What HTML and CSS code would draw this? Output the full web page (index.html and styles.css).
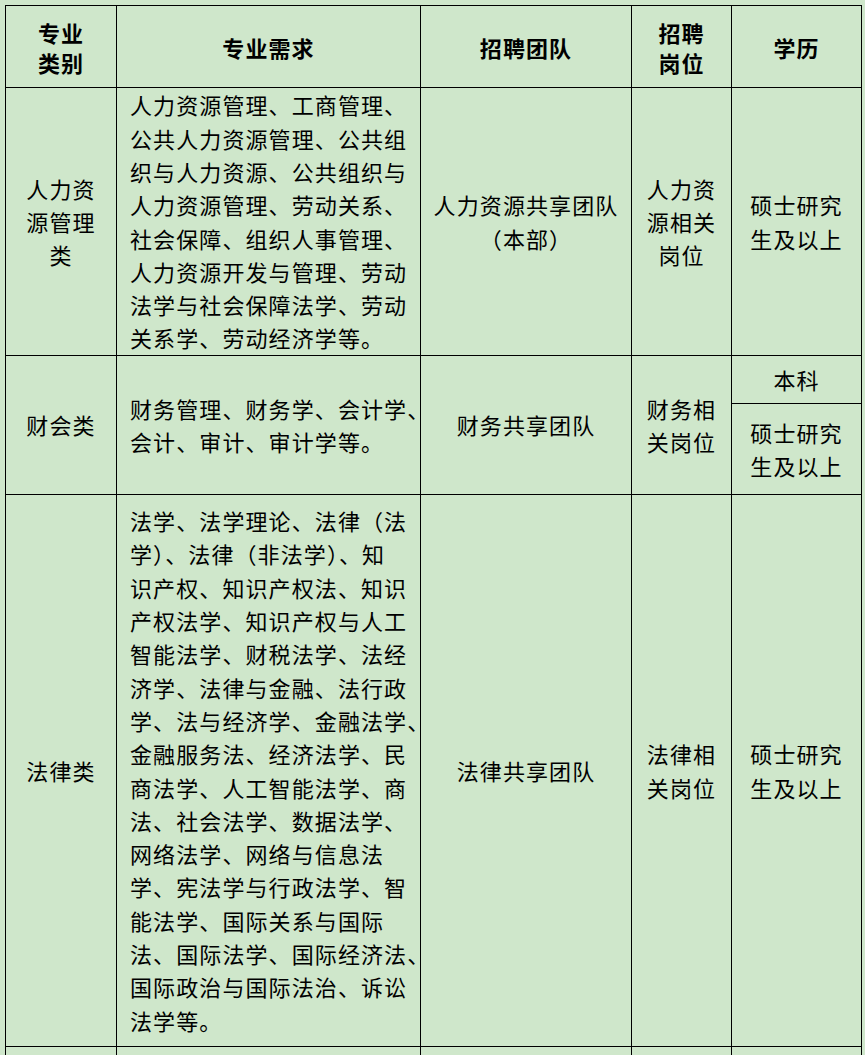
FILE: index.html
```html
<!DOCTYPE html>
<html lang="zh-CN">
<head>
<meta charset="utf-8">
<link rel="stylesheet" href="styles.css">
</head>
<body>
<table class="grid">
  <colgroup>
    <col class="c1"><col class="c2"><col class="c3"><col class="c4"><col class="c5">
  </colgroup>
  <tr class="head">
    <th>专业<br>类别</th>
    <th>专业需求</th>
    <th>招聘团队</th>
    <th>招聘<br>岗位</th>
    <th>学历</th>
  </tr>
  <tr class="r1">
    <td>人力资<br>源管理<br>类</td>
    <td class="req">人力资源管理、工商管理<span class="tail">、</span><br>公共人力资源管理、公共组<br>织与人力资源、公共组织与<br>人力资源管理、劳动关系<span class="tail">、</span><br>社会保障、组织人事管理<span class="tail">、</span><br>人力资源开发与管理、劳动<br>法学与社会保障法学、劳动<br>关系学、劳动经济学等。</td>
    <td>人力资源共享团队<br>（本部）</td>
    <td>人力资<br>源相关<br>岗位</td>
    <td>硕士研究<br>生及以上</td>
  </tr>
  <tr class="r2a">
    <td rowspan="2">财会类</td>
    <td rowspan="2" class="req">财务管理、财务学、会计学<span class="tail">、</span><br>会计、审计、审计学等。</td>
    <td rowspan="2">财务共享团队</td>
    <td rowspan="2">财务相<br>关岗位</td>
    <td>本科</td>
  </tr>
  <tr class="r2b">
    <td>硕士研究<br>生及以上</td>
  </tr>
  <tr class="r3">
    <td>法律类</td>
    <td class="req">法学、法学理论、法律（法<br>学）、法律（非法学）、知<br>识产权、知识产权法、知识<br>产权法学、知识产权与人工<br>智能法学、财税法学、法经<br>济学、法律与金融、法行政<br>学、法与经济学、金融法学<span class="tail">、</span><br>金融服务法、经济法学、民<br>商法学、人工智能法学、商<br>法、社会法学、数据法学<span class="tail">、</span><br>网络法学、网络与信息法<br>学、宪法学与行政法学、智<br>能法学、国际关系与国际<br>法、国际法学、国际经济法<span class="tail">、</span><br>国际政治与国际法治、诉讼<br>法学等。</td>
    <td>法律共享团队</td>
    <td>法律相<br>关岗位</td>
    <td>硕士研究<br>生及以上</td>
  </tr>
  <tr class="r4">
    <td></td><td></td><td></td><td></td><td></td>
  </tr>
</table>
</body>
</html>
```
FILE: styles.css
```css
html, body {
  margin: 0;
  padding: 0;
  background: #cfe7cb;
  overflow: hidden;
}
body {
  padding: 5px 0 0 5px;
  font-family: "Noto Sans CJK SC", sans-serif;
  color: #000;
}
.grid {
  border-collapse: collapse;
  table-layout: fixed;
  width: 856px;
  font-size: 22px;
  letter-spacing: 1.1px;
}
.c1 { width: 111px; }
.c2 { width: 304px; }
.c3 { width: 211px; }
.c4 { width: 100px; }
.c5 { width: 130px; }
.grid th, .grid td {
  border: 1.5px solid #000;
  padding: 0;
  text-align: center;
  vertical-align: middle;
  line-height: 33.3px;
  white-space: nowrap;
}
.grid th {
  font-weight: bold;
  line-height: 30px;
}
.grid td.req {
  text-align: left;
  padding-left: 13px;
}
.tail {
  font-feature-settings: "halt";
}
.head { height: 82px; }
.r1 { height: 268px; }
.r2a { height: 48px; }
.r2b { height: 91px; }
.r3 { height: 552px; }
.r4 { height: 40px; }
```
